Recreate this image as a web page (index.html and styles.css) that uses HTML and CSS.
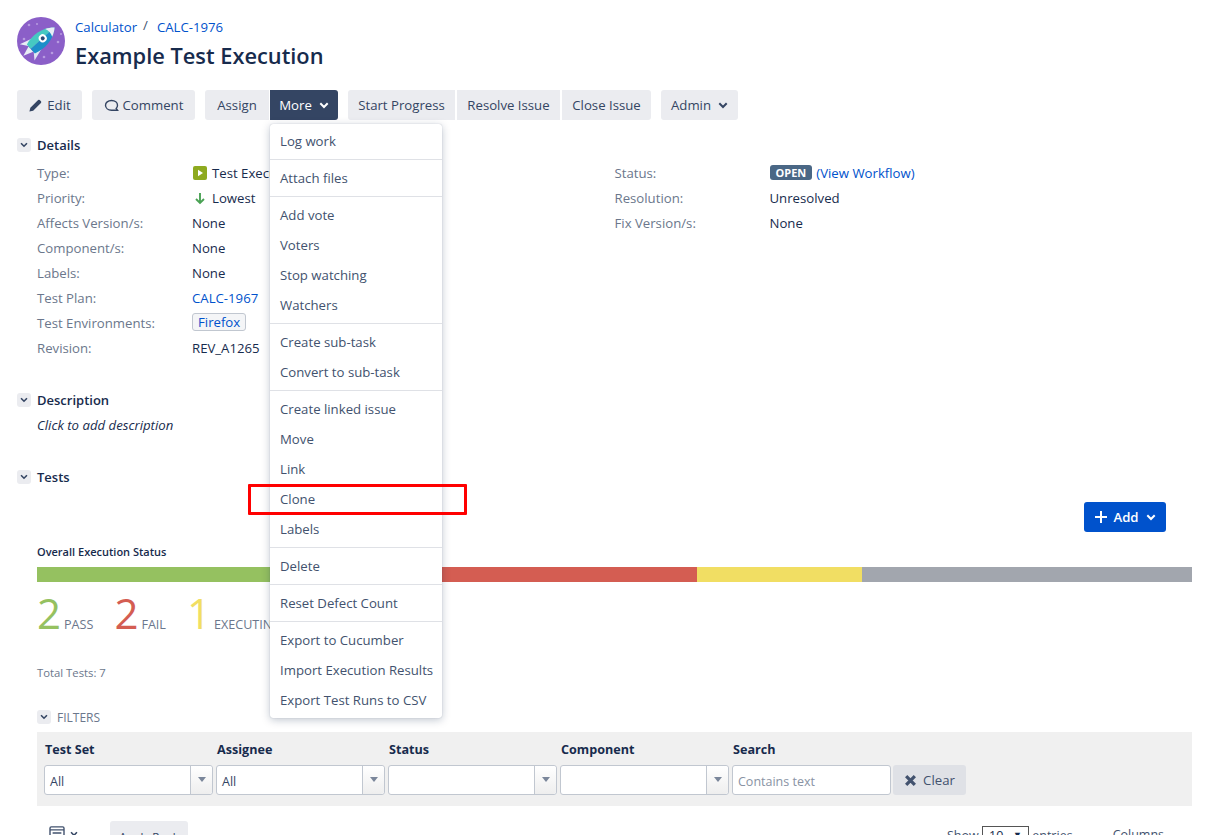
FILE: index.html
```html
<!DOCTYPE html>
<html lang="en">
<head>
<meta charset="utf-8">
<title>Example Test Execution</title>
<link rel="stylesheet" href="styles.css">
</head>
<body>
<div class="page">
  <header class="head">
    <svg class="avatar" viewBox="0 0 48 48" width="48" height="48">
      <circle cx="24" cy="24" r="24" fill="#8b5fc8"/>
      <g fill="#b79be0"><circle cx="12" cy="8" r="1.3"/><circle cx="20" cy="7" r="1"/><circle cx="41" cy="25" r="1.3"/><circle cx="35" cy="36" r="1.3"/><circle cx="27" cy="40" r="1.3"/><circle cx="7" cy="22" r="1.3"/><circle cx="44" cy="17" r="1"/></g>
      <g transform="translate(25 22) rotate(-42)">
        <path d="M-7 -7 L-20 -11 L-14 -3 Z" fill="#e8edf5"/>
        <path d="M-7 7 L-20 11 L-14 3 Z" fill="#dfe6f2"/>
        <path d="M-15 -3.5 L-25 0 L-15 3.5 Z" fill="#e8edf5"/>
        <path d="M-15 -6 C-5 -9.5 8 -8.5 17 0 H-15 Z" fill="#45c9c2"/>
        <path d="M-15 0 H17 C8 8.5 -5 9.5 -15 6 Z" fill="#1b8fc9"/>
        <path d="M9 -5.2 C12 -4 15 -2 17 0 C15 2 12 4 9 5.2 C10.5 2 10.5 -2 9 -5.2 Z" fill="#e8edf5"/>
        <circle cx="1" cy="0" r="4" fill="#fff"/><circle cx="1" cy="0" r="2" fill="#2c4b78"/>
      </g>
    </svg>
    <div>
      <nav class="crumbs"><a href="#">Calculator</a><span class="slash">/</span><a href="#">CALC-1976</a></nav>
      <h1>Example Test Execution</h1>
    </div>
  </header>

  <div class="toolbar">
    <button class="btn w-edit"><svg class="ico" viewBox="0 0 16 16" width="15" height="15"><path d="M1.5 14.5 L2.5 10.5 L10.8 2.2 a1.2 1.2 0 0 1 1.7 0 L13.8 3.5 a1.2 1.2 0 0 1 0 1.7 L5.5 13.5 Z" fill="#344563"/></svg>Edit</button>
    <button class="btn w-comment gap"><svg class="ico" viewBox="0 0 16 16" width="15" height="15"><path d="M8 2.6 C4.3 2.6 1.6 4.9 1.6 7.8 S4.3 13 8 13 H14.4 L13 11.2 C14 10.2 14.4 9.1 14.4 7.8 C14.4 4.9 11.7 2.6 8 2.6 Z" fill="none" stroke="#344563" stroke-width="1.5"/></svg>Comment</button>
    <button class="btn w-assign gap join">Assign</button>
    <button class="btn w-more dark">More<svg class="chev" viewBox="0 0 10 7" width="10" height="7"><path d="M1.3 1.3 L5 5 L8.7 1.3" fill="none" stroke="#fff" stroke-width="2"/></svg></button>
    <button class="btn w-start gap join">Start Progress</button>
    <button class="btn w-resolve join2">Resolve Issue</button>
    <button class="btn w-close join2">Close Issue</button>
    <button class="btn w-admin gap">Admin<svg class="chev" viewBox="0 0 10 7" width="10" height="7"><path d="M1.3 1.3 L5 5 L8.7 1.3" fill="none" stroke="#344563" stroke-width="2"/></svg></button>
  </div>

  <section class="details">
    <h2 class="twixi"><span class="tog"><svg viewBox="0 0 10 7" width="10" height="7"><path d="M1.3 1.3 L5 5 L8.7 1.3" fill="none" stroke="#344563" stroke-width="2"/></svg></span>Details</h2>
    <div class="cols">
      <dl class="fields">
        <dt>Type:</dt><dd><svg class="type" viewBox="0 0 14 14" width="14" height="14"><rect width="14" height="14" rx="2" fill="#8eaa1f"/><path d="M5 3.8 L10 7 L5 10.2 Z" fill="#fff"/></svg>Test Execution</dd>
        <dt>Priority:</dt><dd><svg class="prio" viewBox="0 0 14 14" width="14" height="14"><path d="M7 2 V12 M3 8 L7 12 L11 8" fill="none" stroke="#4aa254" stroke-width="1.9"/></svg>Lowest</dd>
        <dt>Affects Version/s:</dt><dd>None</dd>
        <dt>Component/s:</dt><dd>None</dd>
        <dt>Labels:</dt><dd>None</dd>
        <dt>Test Plan:</dt><dd><a href="#">CALC-1967</a></dd>
        <dt>Test Environments:</dt><dd><a class="tag" href="#">Firefox</a></dd>
        <dt>Revision:</dt><dd>REV_A1265</dd>
      </dl>
      <dl class="fields right">
        <dt>Status:</dt><dd><span class="lozenge">OPEN</span> <a href="#">(View Workflow)</a></dd>
        <dt>Resolution:</dt><dd>Unresolved</dd>
        <dt>Fix Version/s:</dt><dd>None</dd>
      </dl>
    </div>
  </section>

  <section class="description">
    <h2 class="twixi"><span class="tog"><svg viewBox="0 0 10 7" width="10" height="7"><path d="M1.3 1.3 L5 5 L8.7 1.3" fill="none" stroke="#344563" stroke-width="2"/></svg></span>Description</h2>
    <p class="placeholder">Click to add description</p>
  </section>

  <section class="tests">
    <h2 class="twixi"><span class="tog"><svg viewBox="0 0 10 7" width="10" height="7"><path d="M1.3 1.3 L5 5 L8.7 1.3" fill="none" stroke="#344563" stroke-width="2"/></svg></span>Tests</h2>
    <div class="addrow"><button class="add"><svg viewBox="0 0 14 14" width="14" height="14"><path d="M7 1 V13 M1 7 H13" stroke="#fff" stroke-width="2"/></svg>Add<svg class="chev" viewBox="0 0 10 7" width="10" height="7"><path d="M1.3 1.3 L5 5 L8.7 1.3" fill="none" stroke="#fff" stroke-width="2"/></svg></button></div>
    <div class="inner">
      <h3 class="overall">Overall Execution Status</h3>
      <div class="bar"><i class="pass"></i><i class="fail"></i><i class="exec"></i><i class="todo"></i></div>
      <div class="stats">
        <span class="stat"><b class="c-pass">2</b>PASS</span>
        <span class="stat"><b class="c-fail">2</b>FAIL</span>
        <span class="stat"><b class="c-exec">1</b>EXECUTING</span>
      </div>
      <p class="total">Total Tests: 7</p>
    </div>
    <div class="filterhead"><span class="tog"><svg viewBox="0 0 10 7" width="10" height="7"><path d="M1.3 1.3 L5 5 L8.7 1.3" fill="none" stroke="#344563" stroke-width="2"/></svg></span>FILTERS</div>
    <div class="filters">
      <div class="fcol"><label>Test Set</label><div class="sel"><span>All</span><em></em></div></div>
      <div class="fcol"><label>Assignee</label><div class="sel"><span>All</span><em></em></div></div>
      <div class="fcol"><label>Status</label><div class="sel"><span></span><em></em></div></div>
      <div class="fcol"><label>Component</label><div class="sel"><span></span><em></em></div></div>
      <div class="fcol search"><label>Search</label><div class="sel"><span class="ph">Contains text</span></div></div>
      <button class="clear"><svg viewBox="0 0 12 12" width="13" height="13"><path d="M2 2 L10 10 M10 2 L2 10" stroke="#42526e" stroke-width="3"/></svg>Clear</button>
    </div>
    <div class="tablebar">
      <svg class="listico" viewBox="0 0 18 16" width="16" height="14"><rect x="1" y="1" width="16" height="14" rx="1.5" fill="none" stroke="#42526e" stroke-width="1.6"/><path d="M1 4.5 H17 M4 8 H14 M4 11 H14" stroke="#42526e" stroke-width="1.5"/></svg>
      <svg class="listchev" viewBox="0 0 10 7" width="8" height="6"><path d="M1.3 1.3 L5 5 L8.7 1.3" fill="none" stroke="#344563" stroke-width="2"/></svg>
      <button class="rank">Apply Rank</button>
      <span class="show">Show <span class="len">10<i>▼</i></span> entries</span>
      <a class="columns" href="#">Columns</a>
    </div>
  </section>

  <ul class="menu">
    <li>Log work</li>
    <li class="sep">Attach files</li>
    <li class="sep">Add vote</li><li>Voters</li><li>Stop watching</li><li>Watchers</li>
    <li class="sep">Create sub-task</li><li>Convert to sub-task</li>
    <li class="sep">Create linked issue</li><li>Move</li><li>Link</li><li>Clone</li><li>Labels</li>
    <li class="sep">Delete</li>
    <li class="sep">Reset Defect Count</li>
    <li class="sep">Export to Cucumber</li><li>Import Execution Results</li><li>Export Test Runs to CSV</li>
  </ul>
  <div class="highlight"></div>
</div>
</body>
</html>
```

FILE: styles.css
```css
* { box-sizing: border-box; }
html, body { margin: 0; height: 835px; overflow: hidden; background: #fff; }
body { font-family: "Open Sans", "Noto Sans", sans-serif; font-size: 13.2px; color: #172b4d; }
a { color: #0052cc; text-decoration: none; }
button { font: inherit; border: 0; cursor: pointer; }
.page { position: relative; height: 835px; padding: 17px 16px 0 17px; overflow: hidden; }

.head { display: flex; gap: 10px; height: 73px; }
.avatar { flex: none; }
.crumbs { height: 20px; line-height: 20px; color: #42526e; }
.slash { margin: 0 9px 0 6px; position: relative; top: -2px; }
h1 { margin: 3px 0 0; font-size: 21.8px; line-height: 32px; font-weight: 600; color: #172b4d; }

.toolbar { display: flex; height: 30px; }
.btn { display: flex; align-items: center; justify-content: center; height: 30px; background: #ebecf0; color: #344563; border-radius: 3px; padding: 0; white-space: nowrap; }
.gap { margin-left: 10px; }
.join { border-radius: 3px 0 0 3px; }
.join2 { margin-left: 2px; border-radius: 0; }
.w-edit { width: 65px; }
.w-comment { width: 103px; }
.w-assign { width: 64px; }
.w-more { width: 68px; margin-left: 1px; border-radius: 0 3px 3px 0; }
.w-start { width: 107px; }
.w-resolve { width: 103px; }
.w-close { width: 89px; border-radius: 0 3px 3px 0; }
.w-admin { width: 77px; }
.dark { background: #344563; color: #fff; }
.ico { margin-right: 4px; }
.chev { margin-left: 7px; }

.details { margin-top: 16px; }
.twixi { display: flex; align-items: center; margin: 0; height: 18px; font-size: 13px; line-height: 18px; font-weight: 600; color: #172b4d; }
.tog { display: inline-flex; align-items: center; justify-content: center; width: 14px; height: 14px; margin-right: 6px; background: #ebecf0; border-radius: 3px; }
.tog svg { width: 8px; height: 6px; }

.cols { display: flex; padding-left: 20px; margin-top: 6px; }
.fields { display: grid; grid-template-columns: 155px 1fr; grid-auto-rows: 25px; margin: 0; width: 578px; align-items: center; }
.fields dt { color: #6b778c; }
.fields dd { margin: 0; display: flex; align-items: center; gap: 5px; white-space: nowrap; }
.right dd { gap: 4px; }
.type { margin: 0 0 0 1px; }
.prio { margin: 0 0 0 1px; }
.tag { display: inline-block; height: 18px; line-height: 16px; padding: 0 5px; margin-bottom: 2px; border: 1px solid #c1c7d0; border-radius: 3px; background: #f4f5f7; }
.lozenge { display: inline-block; height: 15px; line-height: 15px; padding: 0 6px; color: #fff; font-size: 11px; font-weight: 700; border-radius: 3px; background: #4a6785; }

.description { margin-top: 31px; }
.placeholder { margin: 7px 0 0 20px; height: 18px; line-height: 18px; font-style: italic; color: #172b4d; }
.tests { margin-top: 34px; }

.addrow { display: flex; justify-content: flex-end; padding-right: 26px; margin-top: 16px; }
.add { display: flex; align-items: center; justify-content: center; width: 82px; height: 30px; background: #0052cc; color: #fff; font-weight: 600; border-radius: 3px; }
.add > svg:first-child { margin-right: 5px; }

.inner { padding-left: 20px; }
.overall { margin: 12px 0 0; height: 16px; font-size: 11px; line-height: 16px; font-weight: 600; color: #172b4d; }
.bar { display: flex; height: 15px; margin-top: 7px; }
.bar i { display: block; }
.pass { width: 330px; background: #95c160; }
.fail { width: 330px; background: #d45d52; }
.exec { width: 165px; background: #f1de63; }
.todo { width: 330px; background: #a2a6ae; }
.stats { display: flex; height: 52px; margin-top: 14px; align-items: flex-end; gap: 21px; color: #6b778c; font-size: 12.6px; }
.stat { display: flex; align-items: baseline; gap: 3px; line-height: 46px; }
.stat b { font-size: 42px; font-weight: 400; }
.c-pass { color: #95c160; }
.c-fail { color: #d45d52; }
.c-exec { color: #f1de63; }
.total { margin: 17px 0 0; height: 16px; font-size: 11.3px; line-height: 16px; color: #6b778c; }

.filterhead { display: flex; align-items: center; margin: 27px 0 0 20px; height: 18px; font-size: 12px; color: #6b778c; }
.filters { display: flex; align-items: flex-end; margin: 6px 0 0 20px; width: 1155px; height: 74px; background: #f0f0f0; padding: 0 0 11px 7px; }
.fcol { width: 172px; }
.fcol label { display: block; height: 22px; line-height: 14px; padding-left: 1px; font-weight: 700; font-size: 12.6px; color: #172b4d; }
.sel { display: flex; width: 169px; height: 30px; background: #fff; border: 1px solid #c1c7d0; border-radius: 3px; }
.sel span { flex: 1; padding-left: 5px; line-height: 31px; font-size: 12.5px; color: #344563; }
.sel em { width: 22px; border-left: 1px solid #c1c7d0; border-radius: 0 3px 3px 0; background: linear-gradient(#fff, #eee); position: relative; }
.sel em::after { content: ""; position: absolute; left: 7px; top: 11px; border: 4px solid transparent; border-top: 5px solid #7a869a; border-bottom: 0; }
.search { width: 161px; }
.search .sel { width: 159px; }
.sel .ph { color: #8993a4; }
.clear { display: flex; align-items: center; justify-content: center; gap: 6px; width: 73px; height: 30px; background: #dfe1e6; color: #42526e; border-radius: 3px; }

.tablebar { display: flex; margin: 15px 0 0 32px; position: relative; }
.listico { margin-top: 5px; }
.listchev { margin: 10px 0 0 5px; }
.rank { margin-left: 32px; width: 78px; height: 30px; padding: 0; background: #ebecf0; color: #344563; border-radius: 3px; font-size: 11.5px; }
.show { margin-left: 759px; font-size: 12.5px; color: #42526e; white-space: nowrap; padding-top: 5px; }
.len { display: inline-block; width: 47px; height: 18px; border: 1px solid #555; padding-left: 6px; font-size: 12.5px; color: #172b4d; position: relative; }
.len i { position: absolute; right: 6px; top: 1px; font-style: normal; font-size: 9px; }
.columns { margin-left: 40px; padding-top: 5px; font-size: 12.5px; color: #42526e; }

.menu { position: absolute; left: 270px; top: 124px; width: 172px; margin: 0; padding: 2px 0 3px; list-style: none; background: #fff; border-radius: 3px; box-shadow: 0 2px 8px rgba(9,30,66,.25), 0 0 1px rgba(9,30,66,.3); color: #42526e; }
.menu li { height: 30px; line-height: 30px; padding-left: 10px; white-space: nowrap; }
.menu .sep { height: 34px; margin-top: 3px; border-top: 1px solid #dfe1e6; padding-top: 3px; }
.highlight { position: absolute; left: 248px; top: 484px; width: 219px; height: 31px; border: 3px solid #f00; border-radius: 1px; pointer-events: none; }
```
